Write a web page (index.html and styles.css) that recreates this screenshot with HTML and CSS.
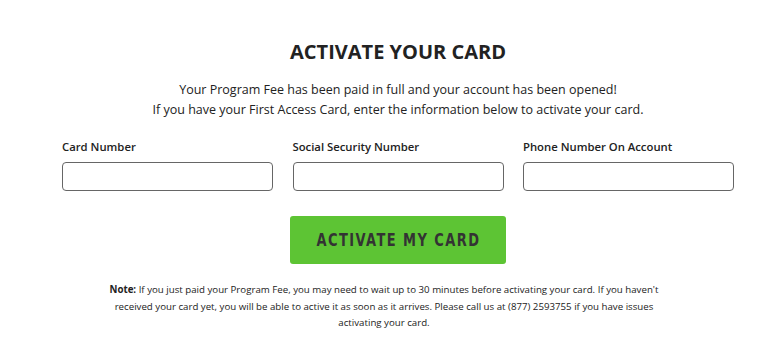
FILE: index.html
```html
<!DOCTYPE html>
<html lang="en">
<head>
    <meta charset="UTF-8">
    <meta name="viewport" content="width=device-width, initial-scale=1.0">
    <title>Activate Your Card</title>
    <link rel="stylesheet" href="styles.css">
</head>
<body>

    <div class="activate">
        <h1>ACTIVATE YOUR CARD</h1>
        <p class="intro">
            Your Program Fee has been paid in full and your account has been opened!<br>
            If you have your First Access Card, enter the information below to activate your card.
        </p>

        <form class="card-form" onsubmit="return false;">
            <div class="fields">
                <div class="field">
                    <label for="cardNumber">Card Number</label>
                    <input type="text" id="cardNumber">
                </div>
                <div class="field">
                    <label for="ssn">Social Security Number</label>
                    <input type="text" id="ssn">
                </div>
                <div class="field">
                    <label for="phone">Phone Number On Account</label>
                    <input type="text" id="phone">
                </div>
            </div>

            <button type="submit" class="btn-activate"><span>ACTIVATE MY CARD</span></button>
        </form>
    </div>

    <p class="note">
        <strong>Note:</strong> If you just paid your Program Fee, you may need to wait up to 30 minutes before activating your card. If you haven't received your card yet, you will be able to active it as soon as it arrives. Please call us at (877) 2593755 if you have issues activating your card.
    </p>

</body>
</html>
```

FILE: styles.css
```css
* {
    margin: 0;
    padding: 0;
    box-sizing: border-box;
}

body {
    font-family: "Open Sans", Arial, sans-serif;
    background-color: #ffffff;
    color: #222222;
}

.activate {
    width: 672px;
    margin-left: 62px;
    padding-top: 38px;
    text-align: center;
}

h1 {
    font-size: 20px;
    font-weight: 700;
    color: #222222;
    line-height: 28px;
}

.intro {
    margin-top: 14px;
    font-size: 12.5px;
    line-height: 20px;
    color: #222222;
}

.fields {
    display: flex;
    justify-content: space-between;
    margin-top: 19px;
    text-align: left;
}

.field {
    width: 211px;
    display: flex;
    flex-direction: column;
}

.field label {
    font-size: 11.3px;
    font-weight: 600;
    line-height: 16px;
    color: #222222;
}

.field input {
    margin-top: 7px;
    height: 29px;
    border: 1px solid #666666;
    border-radius: 4px;
    font-family: inherit;
    font-size: 13px;
    padding: 0 8px;
}

.btn-activate {
    margin-top: 25px;
    width: 216px;
    height: 48px;
    background-color: #5dc434;
    border: none;
    border-radius: 3px;
    color: #333333;
    font-family: "Liberation Sans Narrow", "DejaVu Sans Condensed", Arial, sans-serif;
    font-weight: 700;
    font-size: 17px;
    letter-spacing: 1.7px;
    cursor: pointer;
}

/* letras estreitas como na fonte condensada */
.btn-activate span {
    display: inline-block;
    transform: scaleX(0.85);
}

.note {
    width: 560px;
    margin: 18px 0 0 104px;
    text-align: center;
    font-size: 9.7px;
    line-height: 16.5px;
    color: #222222;
}
```
